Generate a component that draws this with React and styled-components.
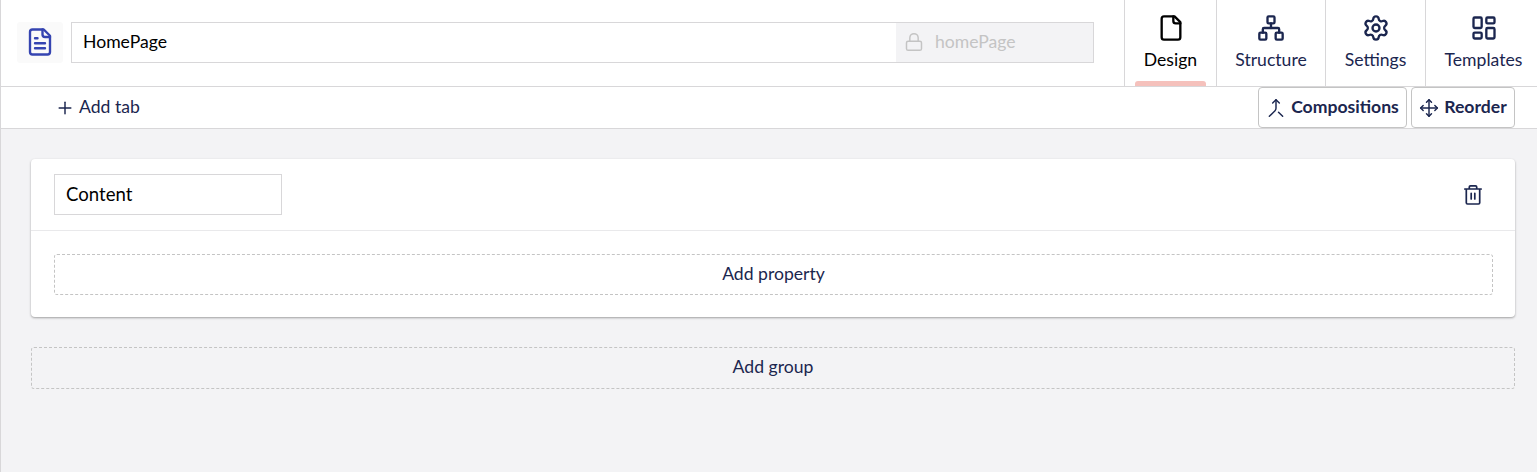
import React from "react";
import styled, { createGlobalStyle, css } from "styled-components";
import { Network, Settings, LayoutDashboard, Merge, Move, Lock, Plus } from "lucide-react";

const border = "#d8d7d9";
const ink = "#1b264f";

const GlobalStyle = createGlobalStyle`
  * { box-sizing: border-box; }
  body {
    margin: 0;
    background: #f3f3f5;
    color: ${ink};
    font: 17.6px/24px Lato, "Liberation Sans", sans-serif;
  }
  button, input { font: inherit; color: inherit; }
  svg { flex: none; display: block; }
`;

const Editor = styled.main`
  height: 472px;
  border-left: 1px solid ${border};
  overflow: hidden;
`;

const Header = styled.header`
  display: flex;
  height: 87px;
  padding-left: 16px;
  background: #fff;
  border-bottom: 1px solid ${border};
`;

const IconButton = styled.button`
  display: grid;
  flex: none;
  place-items: center;
  width: 46px;
  height: 41px;
  margin: 22px 8px 0 0;
  padding: 0 0 1px;
  border: 0;
  border-radius: 3px;
  background: #fafafa;
  color: #3544b1;
`;

const NameField = styled.div`
  display: flex;
  flex: none;
  width: 1023px;
  height: 41px;
  margin: 22px 30px 0 0;
  border: 1px solid ${border};
`;

const TextInput = styled.input`
  flex: 1;
  min-width: 0;
  padding: 0 11px 2px;
  border: 0;
  outline: 0;
  background: #fff;
  color: #000;
  font-size: ${(p) => (p.$large ? 18.6 : 17.6)}px;
`;

const Alias = styled.div`
  display: flex;
  align-items: center;
  gap: 11px;
  width: 197px;
  padding: 0 8px 1px;
  background: #f3f3f5;
  color: #c4c4c4;
`;

const Tabs = styled.nav`
  display: flex;
`;

const Tab = styled.button`
  display: flex;
  flex: none;
  flex-direction: column;
  align-items: center;
  gap: 6px;
  position: relative;
  width: ${(p) => p.$width}px;
  height: 86px;
  padding: 14px 0 0;
  border: 0;
  border-left: 1px solid ${border};
  background: none;
  ${(p) =>
    p.$active &&
    css`
      color: #000;
      &::after {
        content: "";
        position: absolute;
        bottom: 0;
        left: 10px;
        right: 10px;
        height: 5px;
        border-radius: 3px 3px 0 0;
        background: #f5c1bc;
      }
    `}
`;

const Toolbar = styled.div`
  display: flex;
  justify-content: space-between;
  height: 42px;
  padding: 0 22px 0 54px;
  background: #fff;
  border-bottom: 1px solid ${border};
`;

const AddTab = styled.button`
  display: flex;
  align-items: center;
  gap: 4px;
  padding: 0 0 2px;
  border: 0;
  background: none;

  svg { margin-top: 2px; }
`;

const Actions = styled.div`
  display: flex;
  gap: 4px;
`;

const ActionButton = styled.button`
  display: flex;
  align-items: center;
  justify-content: center;
  gap: 5px;
  width: ${(p) => p.$width}px;
  height: 41px;
  padding: 0 0 2px;
  border: 1px solid #c4c4c4;
  border-radius: 4px;
  background: #fff;
  font-weight: 700;

  svg { margin-top: 2px; }
`;

const Content = styled.section`
  padding: 30px 22px 0 30px;
`;

const Card = styled.article`
  height: 158px;
  margin-bottom: 30px;
  border-radius: 4px;
  background: #fff;
  box-shadow: 0 1px 3px rgba(0, 0, 0, 0.12), 0 1px 2px rgba(0, 0, 0, 0.24);
`;

const CardHeader = styled.div`
  display: flex;
  align-items: center;
  justify-content: space-between;
  height: 72px;
  padding: 0 32px 0 23px;
  border-bottom: 1px solid #e9e9eb;
`;

const GroupName = styled.div`
  display: flex;
  width: 228px;
  height: 41px;
  border: 1px solid ${border};
`;

const DeleteButton = styled.button`
  padding: 0;
  border: 0;
  background: none;
`;

const CardBody = styled.div`
  padding: 23px 22px 0 23px;
`;

const DashedButton = styled.button`
  display: block;
  width: 100%;
  height: ${(p) => p.$height}px;
  padding: 0 0 ${(p) => p.$height - 39}px;
  border: 1px dashed #c4c4c4;
  border-radius: 3px;
  background: none;
`;

const Stroke = ({ size = 28, width = 2, children }) => (
  <svg width={size} height={size} viewBox="0 0 24 24" fill="none" stroke="currentColor"
    strokeWidth={width} strokeLinecap="round" strokeLinejoin="round">
    {children}
  </svg>
);

const PageIcon = ({ lines, ...rest }) => (
  <Stroke {...rest}>
    <path d="M15 2H6a2 2 0 0 0-2 2v16a2 2 0 0 0 2 2h12a2 2 0 0 0 2-2V7Z" />
    <path d="M14 2v4a2 2 0 0 0 2 2h4" />
    {lines && <path d="M10 9H8M16 13H8M16 17H8" />}
  </Stroke>
);

const TrashIcon = () => (
  <svg width="20" height="22" viewBox="0 0 20 22" fill="none" stroke="currentColor"
    strokeWidth="1.7" strokeLinecap="round" strokeLinejoin="round">
    <path d="M1.8 5h16.4M3.3 5v13.8a1.2 1.2 0 0 0 1.2 1.2h11a1.2 1.2 0 0 0 1.2-1.2V5M6.3 5V3a1.2 1.2 0 0 1 1.2-1.2h5A1.2 1.2 0 0 1 13.7 3v2M8.2 9.3v5.7M11.8 9.3v5.7" />
  </svg>
);

export default function App() {
  return (
    <>
      <GlobalStyle />
      <Editor>
        <Header>
          <IconButton aria-label="Icon"><PageIcon lines size={30} width={1.9} /></IconButton>
          <NameField>
            <TextInput defaultValue="HomePage" />
            <Alias><Lock size={20} strokeWidth={1.75} />homePage</Alias>
          </NameField>
          <Tabs>
            <Tab $width={92} $active><PageIcon />Design</Tab>
            <Tab $width={109}><Network size={28} />Structure</Tab>
            <Tab $width={100}><Settings size={28} />Settings</Tab>
            <Tab $width={116}><LayoutDashboard size={28} />Templates</Tab>
          </Tabs>
        </Header>
        <Toolbar>
          <AddTab><Plus size={20} strokeWidth={1.75} />Add tab</AddTab>
          <Actions>
            <ActionButton $width={149}><Merge size={20} strokeWidth={1.75} />Compositions</ActionButton>
            <ActionButton $width={104}><Move size={20} strokeWidth={1.75} />Reorder</ActionButton>
          </Actions>
        </Toolbar>
        <Content>
          <Card>
            <CardHeader>
              <GroupName><TextInput $large defaultValue="Content" /></GroupName>
              <DeleteButton aria-label="Delete"><TrashIcon /></DeleteButton>
            </CardHeader>
            <CardBody><DashedButton $height={41}>Add property</DashedButton></CardBody>
          </Card>
          <DashedButton $height={42}>Add group</DashedButton>
        </Content>
      </Editor>
    </>
  );
}
